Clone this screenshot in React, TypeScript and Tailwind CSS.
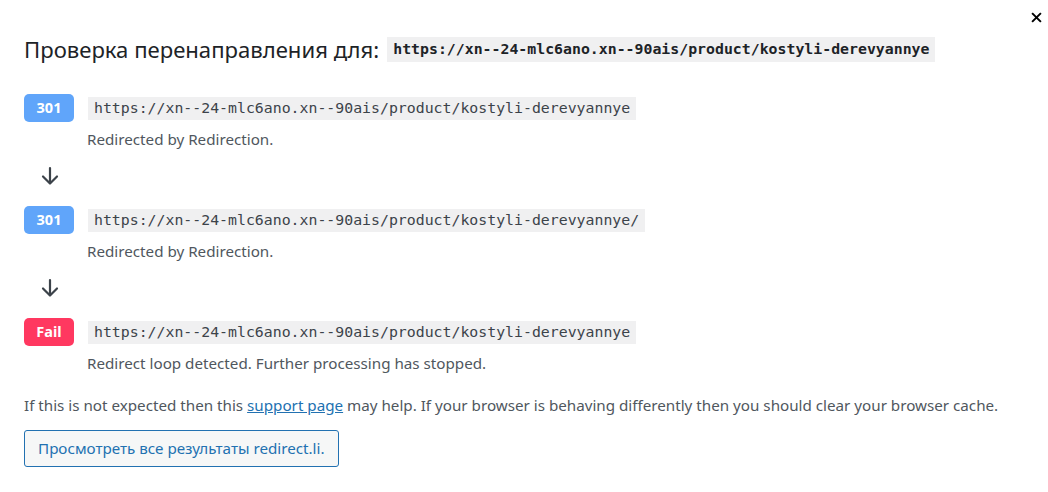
const STEPS = [
  {
    code: "301",
    url: "https://xn--24-mlc6ano.xn--90ais/product/kostyli-derevyannye",
    note: "Redirected by Redirection.",
  },
  {
    code: "301",
    url: "https://xn--24-mlc6ano.xn--90ais/product/kostyli-derevyannye/",
    note: "Redirected by Redirection.",
  },
  {
    code: "Fail",
    url: "https://xn--24-mlc6ano.xn--90ais/product/kostyli-derevyannye",
    note: "Redirect loop detected. Further processing has stopped.",
  },
];

function ArrowDown() {
  return (
    <svg width="20" height="20" viewBox="0 0 20 20" fill="none" stroke="#3c434a" strokeWidth="2.2" strokeLinecap="round" strokeLinejoin="round">
      <path d="M10 2v15" />
      <path d="M3 10.5l7 7 7-7" />
    </svg>
  );
}

export default function App() {
  return (
    <div className="relative w-[1048px] h-[492px] bg-white text-[#50575e] font-['Noto_Sans',sans-serif] text-[15.2px] px-6 pt-[33px]">
      <button className="absolute right-0 top-[5px] w-6 h-6 flex items-center justify-center">
        <svg width="11" height="11" viewBox="0 0 10 10" stroke="#000" strokeWidth="1.8">
          <path d="M1 1l8 8M9 1l-8 8" />
        </svg>
      </button>

      <h1 className="flex items-center gap-2 text-[22.1px] text-[#1d2327] leading-[32px]">
        <span>Проверка перенаправления для:</span>
        <code className="bg-[#f0f0f1] px-[6px] h-[25px] leading-[25px] font-['DejaVu_Sans_Mono',monospace] font-bold text-[14.85px] text-[#1d2327]">
          https://xn--24-mlc6ano.xn--90ais/product/kostyli-derevyannye
        </code>
      </h1>

      <div className="mt-[29px]">
        {STEPS.map((s, i) => (
          <div key={i}>
            <div className="flex items-center gap-[14px]">
              <span
                className={
                  "w-[50px] h-[28px] rounded-[5px] flex items-center justify-center text-white font-bold text-[14.5px] " +
                  (s.code === "Fail" ? "bg-[#ff3860]" : "bg-[#60a5fa]")
                }
              >
                {s.code}
              </span>
              <code className="bg-[#f0f0f1] px-[6px] h-[23px] leading-[23px] font-['DejaVu_Sans_Mono',monospace] text-[14.85px] text-[#3c434a]">
                {s.url}
              </code>
            </div>
            <p className="ml-[63px] mt-[7px] leading-[20px]">{s.note}</p>
            {i < STEPS.length - 1 && (
              <div className="ml-[16px] h-[57px] pb-[4px] flex items-center">
                <ArrowDown />
              </div>
            )}
          </div>
        ))}
      </div>

      <p className="mt-[22px] leading-[20px]">
        If this is not expected then this{" "}
        <a href="#" className="text-[#2271b1] underline">
          support page
        </a>{" "}
        may help. If your browser is behaving differently then you should clear your browser cache.
      </p>

      <button className="mt-[15px] h-[37px] px-[13px] border border-[#2271b1] rounded-[3px] bg-[#f6f7f7] text-[#2271b1] text-[15.2px]">
        Просмотреть все результаты redirect.li.
      </button>
    </div>
  );
}
